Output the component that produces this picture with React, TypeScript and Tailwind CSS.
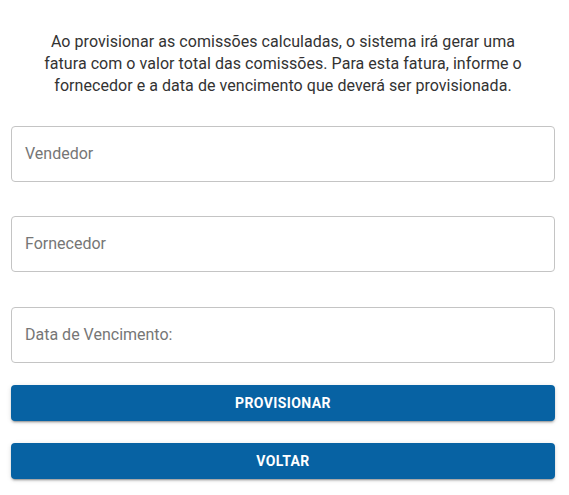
import React from "react";

const fields = ["Vendedor", "Fornecedor", "Data de Vencimento:"];

export default function App() {
  return (
    <div className="w-[569px] h-[495px] bg-white font-['Roboto',sans-serif]">
      <div className="pl-[11px] pr-[14px] pt-[31px]">
        <p className="mx-auto w-[490px] text-center text-[16px] leading-[22px] tracking-[0.05px] text-[#333333]">
          Ao provisionar as comissões calculadas, o sistema irá gerar uma fatura com o valor total das comissões. Para esta fatura, informe o fornecedor e a data de vencimento que deverá ser provisionada.
        </p>
        <div className="mt-[29px] flex flex-col">
          <div className="h-[56px] rounded-[4px] border border-[#c4c4c4] flex items-center px-[13px] text-[16px] text-[#767676]">
            {fields[0]}
          </div>
          <div className="mt-[34px] h-[56px] rounded-[4px] border border-[#c4c4c4] flex items-center px-[13px] text-[16px] text-[#767676]">
            {fields[1]}
          </div>
          <div className="mt-[35px] h-[56px] rounded-[4px] border border-[#c4c4c4] flex items-center px-[13px] text-[16px] text-[#767676]">
            {fields[2]}
          </div>
        </div>
        <div className="mt-[22px] flex flex-col gap-[22px]">
          {["PROVISIONAR", "VOLTAR"].map((b) => (
            <button
              key={b}
              className="h-[36px] w-full rounded-[4px] bg-[#0762a3] text-white text-[14px] font-bold tracking-[0.4px] shadow-[0_3px_1px_-2px_rgba(0,0,0,0.2),0_2px_2px_0_rgba(0,0,0,0.14),0_1px_5px_0_rgba(0,0,0,0.12)]"
            >
              {b}
            </button>
          ))}
        </div>
      </div>
    </div>
  );
}
